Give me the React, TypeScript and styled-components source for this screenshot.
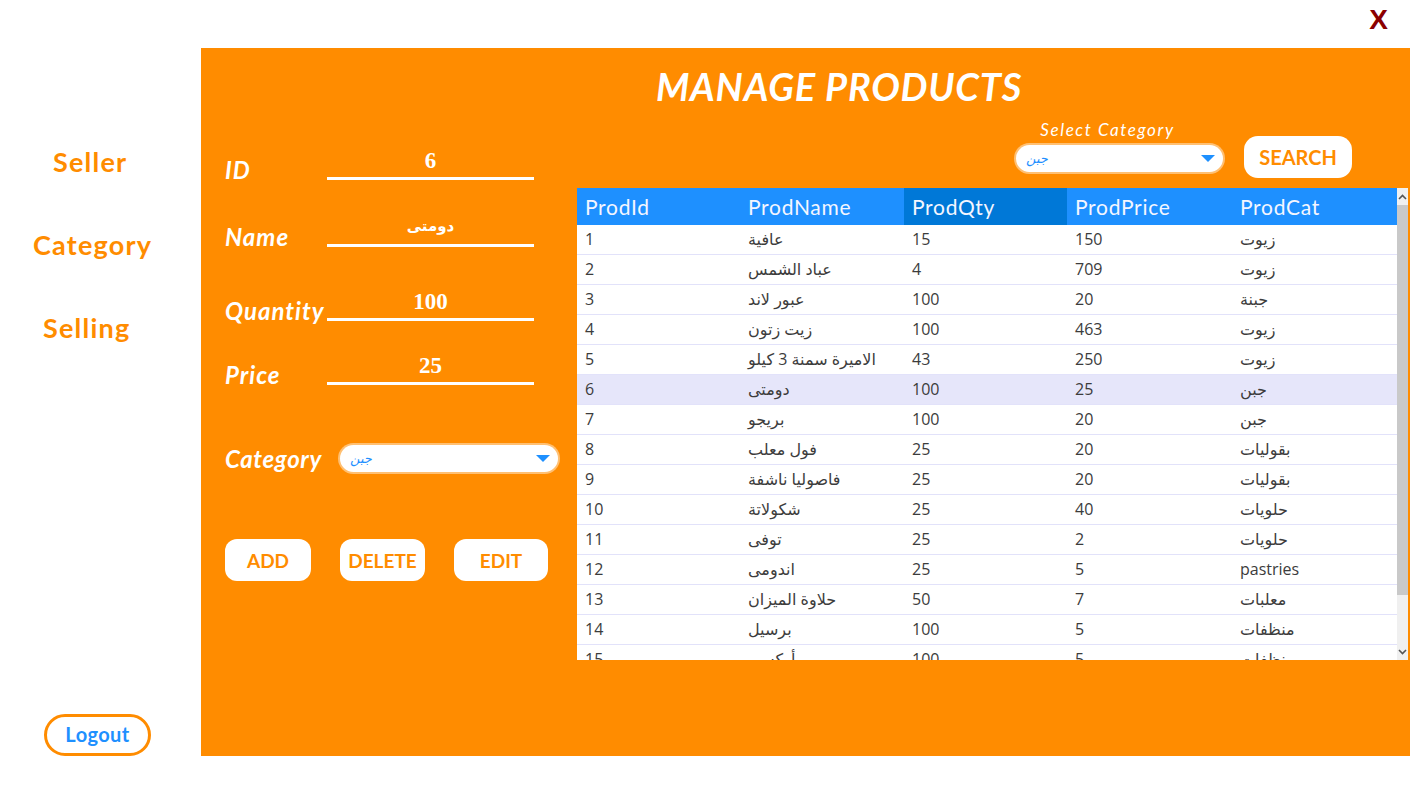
import React from "react";
import styled, { createGlobalStyle } from "styled-components";

const ORANGE = "#FF8C00";
const BLUE = "#1E90FF";

const Global = createGlobalStyle`
  html, body { margin: 0; padding: 0; background: #fff; }
  body { font-family: "Lato", "DejaVu Sans", sans-serif; }
  * { box-sizing: border-box; }
`;

const Page = styled.div`
  width: 1410px;
  height: 803px;
  display: flex;
  flex-direction: column;
  overflow: hidden;
`;

const TopBar = styled.div`
  height: 48px;
  display: flex;
  justify-content: flex-end;
  align-items: flex-start;
  padding: 4px 22px 0 0;
`;

const Close = styled.span`
  font-family: "Liberation Sans", sans-serif;
  font-weight: 700;
  font-size: 28px;
  line-height: 32px;
  color: #8b0000;
  cursor: pointer;
`;

const Main = styled.div`
  height: 708px;
  display: flex;
`;

const Sidebar = styled.nav`
  width: 201px;
  display: flex;
  flex-direction: column;
  align-items: flex-start;
  padding-top: 98px;
  gap: 51px;
`;

const NavItem = styled.span<{ $indent: number }>`
  margin-left: ${(p) => p.$indent}px;
  font-family: "Lato", sans-serif;
  font-weight: 700;
  font-size: 27px;
  line-height: 32px;
  letter-spacing: 1.2px;
  color: ${ORANGE};
`;

const LogoutButton = styled.button`
  margin-top: auto;
  margin-left: 44px;
  width: 107px;
  height: 42px;
  border: 3px solid ${ORANGE};
  border-radius: 21px;
  background: #fff;
  color: ${BLUE};
  font-family: "Lato", sans-serif;
  font-weight: 700;
  font-size: 20px;
  letter-spacing: 0.4px;
  padding: 0 0 2px;
`;

const Panel = styled.section`
  flex: 1;
  background: ${ORANGE};
  display: flex;
  flex-direction: column;
`;

const Title = styled.h1`
  margin: 0;
  height: 70px;
  padding: 16px 0 0 67px;
  text-align: center;
  font-family: "Lato", sans-serif;
  font-style: italic;
  font-weight: 700;
  font-size: 38px;
  line-height: 44px;
  letter-spacing: 0.8px;
  color: #fff;
`;

const Body = styled.div`
  flex: 1;
  display: flex;
`;

const Form = styled.div`
  width: 376px;
  padding-left: 24px;
  display: flex;
  flex-direction: column;
`;

const Field = styled.div<{ $top: number }>`
  display: flex;
  align-items: flex-end;
  margin-top: ${(p) => p.$top}px;
`;

const Label = styled.label<{ $width: number }>`
  width: ${(p) => p.$width}px;
  margin-bottom: -3px;
  font-family: "Lato", sans-serif;
  font-style: italic;
  font-weight: 700;
  font-size: 24px;
  line-height: 26px;
  letter-spacing: 1px;
  color: #fff;
  white-space: nowrap;
`;

const InputBox = styled.div`
  width: 207px;
  height: 36px;
  border-bottom: 3px solid #fff;
  display: flex;
  justify-content: center;
  align-items: center;
  color: #fff;
  font-family: "Liberation Serif", "DejaVu Sans", serif;
  font-weight: 700;
  font-size: 23px;
`;

const ArabicValue = styled.span`
  font-family: "DejaVu Sans", sans-serif;
  font-size: 15px;
  font-weight: 700;
  margin-top: -4px;
`;

const CategoryRow = styled.div`
  display: flex;
  align-items: center;
  margin-top: 60px;
`;

const CategoryLabel = styled.span`
  width: 115px;
  font-family: "Lato", sans-serif;
  font-style: italic;
  font-weight: 700;
  font-size: 24px;
  line-height: 26px;
  letter-spacing: 0.6px;
  color: #fff;
  white-space: nowrap;
`;

const Select = styled.div<{ $width: number }>`
  width: ${(p) => p.$width}px;
  height: 27px;
  background: #fff;
  border-radius: 14px;
  box-shadow: 0 0 0 2px rgba(255, 255, 255, 0.45);
  display: flex;
  align-items: center;
  justify-content: space-between;
  padding: 0 8px 0 10px;
`;

const SelectText = styled.span`
  font-family: "DejaVu Sans", sans-serif;
  font-style: italic;
  font-size: 13px;
  color: ${BLUE};
`;

const Caret = styled.span`
  width: 0;
  height: 0;
  border-left: 7px solid transparent;
  border-right: 7px solid transparent;
  border-top: 7px solid ${BLUE};
`;

const ButtonRow = styled.div`
  width: 323px;
  display: flex;
  justify-content: space-between;
  margin-top: 67px;
`;

const ActionButton = styled.button<{ $width: number }>`
  width: ${(p) => p.$width}px;
  height: 42px;
  border: none;
  border-radius: 12px;
  background: #fff;
  color: ${ORANGE};
  font-family: "Lato", sans-serif;
  font-weight: 700;
  font-size: 19px;
  padding: 0;
`;

const Right = styled.div`
  flex: 1;
  display: flex;
  flex-direction: column;
`;

const Toolbar = styled.div`
  height: 70px;
  display: flex;
  justify-content: flex-end;
  align-items: flex-end;
  padding: 0 58px 10px 0;
  gap: 21px;
`;

const SelectGroup = styled.div`
  display: flex;
  flex-direction: column;
  align-items: center;
  margin-bottom: 6px;
`;

const SelectLabel = styled.span`
  font-family: "Lato", sans-serif;
  font-style: italic;
  font-size: 17px;
  line-height: 18px;
  letter-spacing: 1.6px;
  color: #fff;
  margin: 0 24px 6px 0;
`;

const SearchButton = styled.button`
  width: 108px;
  height: 42px;
  border: none;
  border-radius: 14px;
  background: #fff;
  color: ${ORANGE};
  font-family: "Lato", sans-serif;
  font-weight: 700;
  font-size: 20px;
  padding: 0;
`;

const TableArea = styled.div`
  height: 472px;
  display: flex;
`;

const Table = styled.div`
  width: 820px;
  overflow: hidden;
  background: #fff;
`;

const COLS = "163px 164px 163px 165px 165px";

const HeaderRow = styled.div`
  display: grid;
  grid-template-columns: ${COLS};
  height: 37px;
  background: ${BLUE};
`;

const HeaderCell = styled.div<{ $active?: boolean }>`
  background: ${(p) => (p.$active ? "#0078D7" : "transparent")};
  color: #f4f6ff;
  font-family: "Lato", sans-serif;
  font-size: 21px;
  line-height: 37px;
  letter-spacing: 0.7px;
  padding-left: 8px;
`;

const Row = styled.div<{ $selected?: boolean }>`
  display: grid;
  grid-template-columns: ${COLS};
  height: 30px;
  background: ${(p) => (p.$selected ? "#E6E6FA" : "#fff")};
  border-bottom: 1px solid #e2e2fa;
`;

const Cell = styled.div`
  padding-left: 8px;
  font-family: "Open Sans", "DejaVu Sans", sans-serif;
  font-size: 16px;
  line-height: 29px;
  color: #3c3c3c;
  white-space: nowrap;
`;

const ScrollBar = styled.div`
  width: 11px;
  background: #f0f0f0;
  display: flex;
  flex-direction: column;
  align-items: center;
`;

const ScrollArrow = styled.div<{ $bottom?: boolean }>`
  height: 17px;
  margin-top: ${(p) => (p.$bottom ? "auto" : "0")};
  display: flex;
  align-items: center;
  justify-content: center;
`;

const Thumb = styled.div`
  width: 11px;
  height: 390px;
  background: #c9c9c9;
`;

const rows: [number, string, number, number, string][] = [
  [1, "عافية", 15, 150, "زيوت"],
  [2, "عباد الشمس", 4, 709, "زيوت"],
  [3, "عبور لاند", 100, 20, "جبنة"],
  [4, "زيت زتون", 100, 463, "زيوت"],
  [5, "الاميرة سمنة 3 كيلو", 43, 250, "زيوت"],
  [6, "دومتى", 100, 25, "جبن"],
  [7, "بريجو", 100, 20, "جبن"],
  [8, "فول معلب", 25, 20, "بقوليات"],
  [9, "فاصوليا ناشفة", 25, 20, "بقوليات"],
  [10, "شكولاتة", 25, 40, "حلويات"],
  [11, "توفى", 25, 2, "حلويات"],
  [12, "اندومى", 25, 5, "pastries"],
  [13, "حلاوة الميزان", 50, 7, "معلبات"],
  [14, "برسيل", 100, 5, "منظفات"],
  [15, "أوكسي", 100, 5, "منظفات"],
];

const Chevron = ({ up }: { up: boolean }) => (
  <svg width="9" height="6" viewBox="0 0 9 6">
    <polyline
      points={up ? "1,5 4.5,1.5 8,5" : "1,1 4.5,4.5 8,1"}
      fill="none"
      stroke="#555"
      strokeWidth="1.6"
    />
  </svg>
);

export default function App() {
  return (
    <Page>
      <Global />
      <TopBar>
        <Close>X</Close>
      </TopBar>
      <Main>
        <Sidebar>
          <NavItem $indent={53}>Seller</NavItem>
          <NavItem $indent={33}>Category</NavItem>
          <NavItem $indent={43}>Selling</NavItem>
          <LogoutButton>Logout</LogoutButton>
        </Sidebar>
        <Panel>
          <Title>MANAGE PRODUCTS</Title>
          <Body>
            <Form>
              <Field $top={26}>
                <Label $width={102}>ID</Label>
                <InputBox>6</InputBox>
              </Field>
              <Field $top={31}>
                <Label $width={102}>Name</Label>
                <InputBox>
                  <ArabicValue>دومتى</ArabicValue>
                </InputBox>
              </Field>
              <Field $top={38}>
                <Label $width={102}>Quantity</Label>
                <InputBox>100</InputBox>
              </Field>
              <Field $top={28}>
                <Label $width={102}>Price</Label>
                <InputBox>25</InputBox>
              </Field>
              <CategoryRow>
                <CategoryLabel>Category</CategoryLabel>
                <Select $width={218}>
                  <SelectText>جبن</SelectText>
                  <Caret />
                </Select>
              </CategoryRow>
              <ButtonRow>
                <ActionButton $width={86}>ADD</ActionButton>
                <ActionButton $width={85}>DELETE</ActionButton>
                <ActionButton $width={94}>EDIT</ActionButton>
              </ButtonRow>
            </Form>
            <Right>
              <Toolbar>
                <SelectGroup>
                  <SelectLabel>Select Category</SelectLabel>
                  <Select $width={207}>
                    <SelectText>جبن</SelectText>
                    <Caret />
                  </Select>
                </SelectGroup>
                <SearchButton>SEARCH</SearchButton>
              </Toolbar>
              <TableArea>
                <Table>
                  <HeaderRow>
                    <HeaderCell>ProdId</HeaderCell>
                    <HeaderCell>ProdName</HeaderCell>
                    <HeaderCell $active>ProdQty</HeaderCell>
                    <HeaderCell>ProdPrice</HeaderCell>
                    <HeaderCell>ProdCat</HeaderCell>
                  </HeaderRow>
                  {rows.map(([id, name, qty, price, cat]) => (
                    <Row key={id} $selected={id === 6}>
                      <Cell>{id}</Cell>
                      <Cell>{name}</Cell>
                      <Cell>{qty}</Cell>
                      <Cell>{price}</Cell>
                      <Cell>{cat}</Cell>
                    </Row>
                  ))}
                </Table>
                <ScrollBar>
                  <ScrollArrow>
                    <Chevron up />
                  </ScrollArrow>
                  <Thumb />
                  <ScrollArrow $bottom>
                    <Chevron up={false} />
                  </ScrollArrow>
                </ScrollBar>
              </TableArea>
            </Right>
          </Body>
        </Panel>
      </Main>
    </Page>
  );
}
